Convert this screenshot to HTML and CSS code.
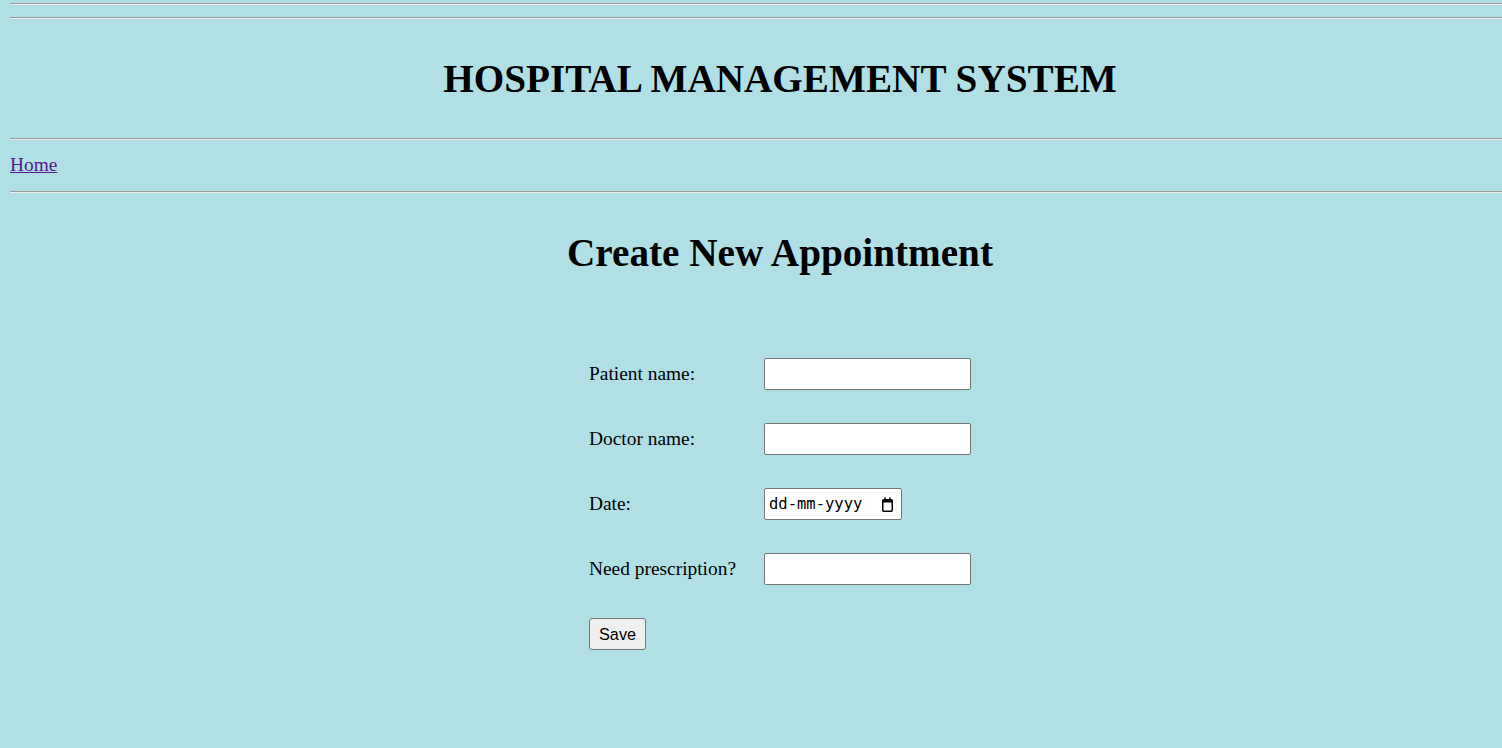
FILE: index.html
```html
<!DOCTYPE html>
<html lang="en">
<head>
<meta charset="utf-8">
<title>Hospital Management System</title>
<link rel="stylesheet" href="styles.css">
</head>
<body>
<div class="page">
  <header class="site-header">
    <hr class="rule rule-top">
    <hr class="rule rule-second">
    <h1 class="site-title">HOSPITAL MANAGEMENT SYSTEM</h1>
    <hr class="rule rule-third">
    <nav class="nav"><a href="#" class="nav-link">Home</a></nav>
    <hr class="rule rule-fourth">
  </header>
  <main class="content">
    <h1 class="page-title">Create New Appointment</h1>
    <form class="form-grid">
      <label class="field-label" for="patient">Patient name:</label>
      <input class="text-input" id="patient" type="text">
      <label class="field-label" for="doctor">Doctor name:</label>
      <input class="text-input" id="doctor" type="text">
      <label class="field-label" for="date">Date:</label>
      <div class="date-field" id="date">
        <span class="date-text">dd-mm-yyyy</span>
        <svg class="date-icon" width="11" height="15" viewBox="0 0 11 15" aria-hidden="true">
          <rect x="0.75" y="2.75" width="9.5" height="11.5" rx="1" fill="none" stroke="#000" stroke-width="1.5"/>
          <rect x="1" y="3" width="9" height="2.5" fill="#000"/>
          <rect x="2.3" y="0.5" width="1.6" height="2.5" fill="#000"/>
          <rect x="7.1" y="0.5" width="1.6" height="2.5" fill="#000"/>
        </svg>
      </div>
      <label class="field-label" for="prescription">Need prescription?</label>
      <input class="text-input" id="prescription" type="text">
      <button class="save-button" type="button">Save</button>
    </form>
  </main>
</div>
</body>
</html>
```
FILE: styles.css
```css
html {
  overflow: hidden;
  background: #b0e0e6;
}

body {
  margin: 0;
  background: #b0e0e6;
  color: #000;
  font-family: "Liberation Serif", "Times New Roman", serif;
  font-size: 19.4px;
}

.page {
  width: 1540px;
  margin-left: 10px;
}

.rule {
  height: 0;
  margin: 0;
  border: 0;
  border-top: 1px solid #9a9a9a;
  border-bottom: 1px solid #eeeeee;
}

.rule-top { margin-top: 3px; }
.rule-second { margin-top: 12px; }
.rule-third { margin-top: 35px; }
.rule-fourth { margin-top: 14px; }

.site-title,
.page-title {
  margin: 36px 0 0;
  font-size: 39.2px;
  line-height: 48px;
  font-weight: bold;
  text-align: center;
}

.nav {
  margin-top: 13px;
  line-height: 24px;
}

.nav-link {
  color: #551a8b;
  text-decoration: underline;
}

.form-grid {
  display: grid;
  grid-template-columns: 175px 207px;
  grid-auto-rows: 32px;
  row-gap: 33px;
  align-items: center;
  width: 382px;
  margin: 81px auto 0;
}

.field-label {
  line-height: 24px;
}

.text-input {
  box-sizing: border-box;
  width: 207px;
  height: 32px;
  margin: 0;
  padding: 0 4px;
  border: 1px solid #767676;
  border-radius: 2px;
  background: #fff;
  font: 16px "Liberation Sans", Arial, sans-serif;
}

.date-field {
  box-sizing: border-box;
  display: flex;
  align-items: center;
  justify-content: space-between;
  width: 138px;
  height: 32px;
  padding: 0 8px 0 4px;
  border: 1px solid #767676;
  border-radius: 2px;
  background: #fff;
}

.date-text {
  font-family: "DejaVu Sans Mono", "Liberation Mono", monospace;
  font-size: 15.5px;
  line-height: 20px;
  color: #000;
}

.date-icon {
  display: block;
}

.save-button {
  justify-self: start;
  box-sizing: border-box;
  height: 32px;
  margin: 0;
  padding: 0 9px;
  border: 1px solid #767676;
  border-radius: 3px;
  background: #efefef;
  color: #000;
  font: 16.3px "Liberation Sans", Arial, sans-serif;
}
```
